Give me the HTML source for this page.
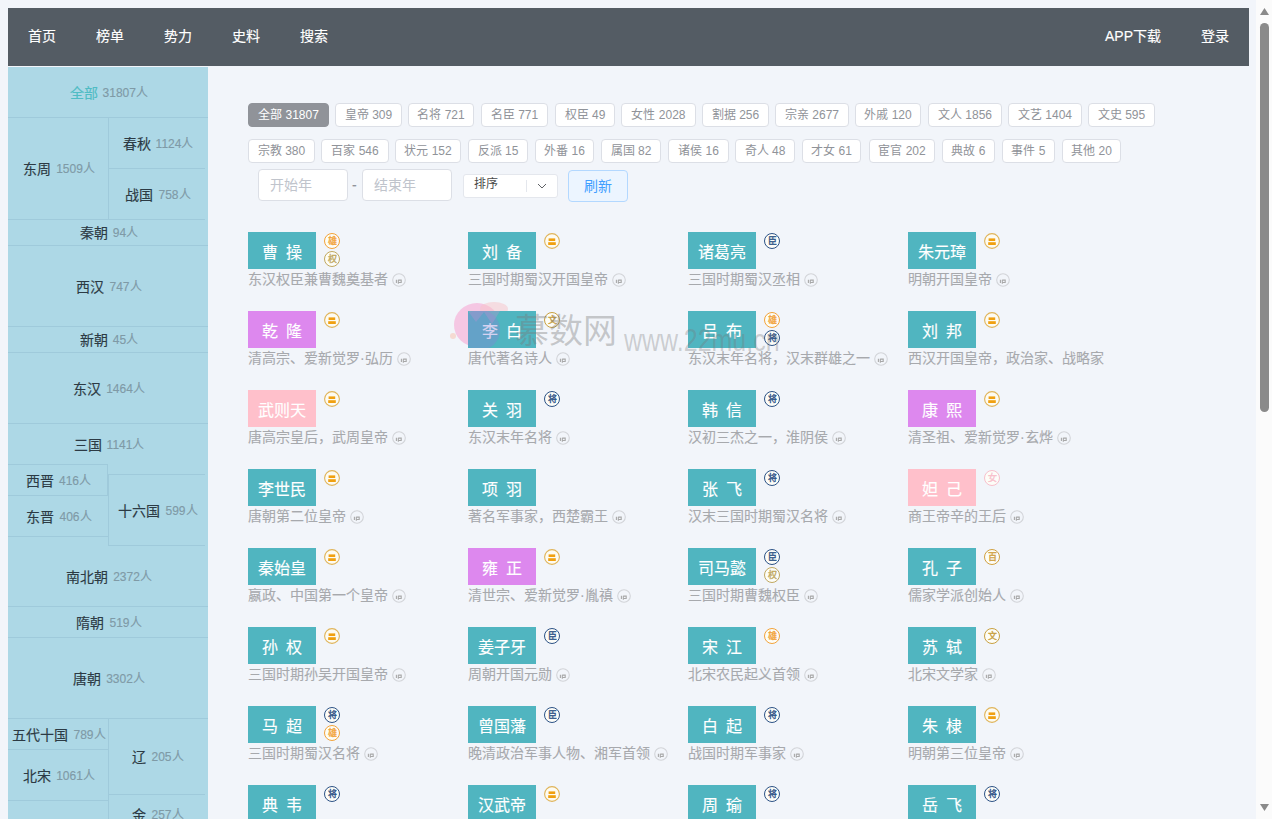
<!DOCTYPE html><html lang="zh-CN"><head><meta charset="utf-8"><style>
*{margin:0;padding:0;box-sizing:border-box}
html,body{width:1272px;height:819px;overflow:hidden;background:#f2f5fa;font-family:"Liberation Sans",sans-serif;-webkit-text-stroke-width:0.15px}
.a{position:absolute}
#hdr{left:8px;top:8px;width:1241px;height:58px;background:#545c64}
.nav{position:absolute;top:-1px;height:58px;line-height:58px;color:#fff;font-size:14px;white-space:nowrap}
#side{left:8px;top:67px;width:200px;height:752px;background:#add8e6;overflow:hidden}
.cell{position:absolute;display:flex;align-items:center;justify-content:center;white-space:nowrap;border-bottom:1px solid #9fcadb}
.cell .w{position:relative;top:1px;left:1px;line-height:16px}
.cell .n{font-size:14px;color:#2c3a44}
.cell .c{font-size:12px;color:#7f9aa6;margin-left:5px;position:relative;top:-1px}
.tag{-webkit-text-stroke-width:0;position:absolute;height:24px;line-height:22px;border:1px solid #dcdfe6;border-radius:4px;background:#fff;color:#909399;font-size:12px;text-align:center;white-space:nowrap}
.tag.on{background:#909399;border-color:#909399;color:#fff}
.inp{-webkit-text-stroke-width:0;position:absolute;height:32px;border:1px solid #dcdfe6;border-radius:4px;background:#fff;color:#c0c4cc;font-size:14px;line-height:30px;padding-left:11px}
.nm{position:absolute;width:68px;height:37px;line-height:41px;color:#fff;font-size:16px;text-align:center;white-space:nowrap}
.ds{-webkit-text-stroke-width:0.1px;position:absolute;font-size:14px;color:#a7a9ad;white-space:nowrap;line-height:14px}
.bd{position:absolute;width:16px;height:16px;border-radius:50%;border:1px solid;font-size:9px;line-height:14px;text-align:center;background:#fdfdf8;-webkit-text-stroke-width:0.35px}
.ip{display:inline-block;width:14px;height:14px;vertical-align:top;margin-left:4px;margin-top:1px}
</style></head><body><div id="hdr" class="a">
<div class="nav" style="left:20px">首页</div>
<div class="nav" style="left:88px">榜单</div>
<div class="nav" style="left:156px">势力</div>
<div class="nav" style="left:224px">史料</div>
<div class="nav" style="left:292px">搜索</div>
<div class="nav" style="left:1097px">APP下载</div>
<div class="nav" style="left:1193px">登录</div>
</div>
<div id="side" class="a">
<div class="cell" style="left:0px;top:0px;width:200px;height:51px;"><span class="w"><span class="n" style="color:#4fbcc4">全部</span><span class="c" style="margin-left:4.5px">31807人</span></span></div>
<div class="cell" style="left:0px;top:51px;width:100px;height:102px;"><span class="w"><span class="n" style="">东周</span><span class="c" style="">1509人</span></span></div>
<div class="cell" style="left:100px;top:51px;width:97px;height:51px;border-left:1px solid #9fcadb;"><span class="w"><span class="n" style="">春秋</span><span class="c" style="">1124人</span></span></div>
<div class="cell" style="left:100px;top:102px;width:97px;height:51px;border-left:1px solid #9fcadb;"><span class="w"><span class="n" style="">战国</span><span class="c" style="">758人</span></span></div>
<div class="cell" style="left:0px;top:153px;width:200px;height:26px;"><span class="w"><span class="n" style="">秦朝</span><span class="c" style="">94人</span></span></div>
<div class="cell" style="left:0px;top:179px;width:200px;height:81px;"><span class="w"><span class="n" style="">西汉</span><span class="c" style="">747人</span></span></div>
<div class="cell" style="left:0px;top:260px;width:200px;height:26px;"><span class="w"><span class="n" style="">新朝</span><span class="c" style="">45人</span></span></div>
<div class="cell" style="left:0px;top:286px;width:200px;height:71px;"><span class="w"><span class="n" style="">东汉</span><span class="c" style="">1464人</span></span></div>
<div class="cell" style="left:0px;top:357px;width:200px;height:41px;border-bottom:none;"><span class="w"><span class="n" style="">三国</span><span class="c" style="">1141人</span></span></div>
<div class="cell" style="left:0px;top:397px;width:100px;height:32px;border-top:1px solid #9fcadb;border-right:1px solid #9fcadb;"><span class="w"><span class="n" style="">西晋</span><span class="c" style="">416人</span></span></div>
<div class="cell" style="left:0px;top:429px;width:100px;height:41px;"><span class="w"><span class="n" style="">东晋</span><span class="c" style="">406人</span></span></div>
<div class="cell" style="left:100px;top:407px;width:97px;height:72px;border-left:1px solid #9fcadb;border-top:1px solid #9fcadb;"><span class="w"><span class="n" style="">十六国</span><span class="c" style="">599人</span></span></div>
<div class="cell" style="left:0px;top:479px;width:200px;height:61px;"><span class="w"><span class="n" style="">南北朝</span><span class="c" style="">2372人</span></span></div>
<div class="cell" style="left:0px;top:540px;width:200px;height:31px;"><span class="w"><span class="n" style="">隋朝</span><span class="c" style="">519人</span></span></div>
<div class="cell" style="left:0px;top:571px;width:200px;height:81px;"><span class="w"><span class="n" style="">唐朝</span><span class="c" style="">3302人</span></span></div>
<div class="cell" style="left:0px;top:652px;width:100px;height:31px;"><span class="w"><span class="n" style="">五代十国</span><span class="c" style="">789人</span></span></div>
<div class="cell" style="left:0px;top:683px;width:100px;height:51px;"><span class="w"><span class="n" style="">北宋</span><span class="c" style="">1061人</span></span></div>
<div class="cell" style="left:100px;top:652px;width:97px;height:76px;border-left:1px solid #9fcadb;"><span class="w"><span class="n" style="">辽</span><span class="c" style="">205人</span></span></div>
<div class="cell" style="left:100px;top:728px;width:97px;height:40px;border-left:1px solid #9fcadb;"><span class="w"><span class="n" style="">金</span><span class="c" style="">257人</span></span></div>
<div class="cell" style="left:0px;top:734px;width:100px;height:59px;"><span class="w"><span class="n" style="">南宋</span><span class="c" style="">1200人</span></span></div>
</div>
<div class="tag on" style="left:248px;top:103px;width:81px">全部 31807</div>
<div class="tag" style="left:335px;top:103px;width:67px">皇帝 309</div>
<div class="tag" style="left:408px;top:103px;width:66px">名将 721</div>
<div class="tag" style="left:481px;top:103px;width:67px">名臣 771</div>
<div class="tag" style="left:555px;top:103px;width:60px">权臣 49</div>
<div class="tag" style="left:621px;top:103px;width:75px">女性 2028</div>
<div class="tag" style="left:702px;top:103px;width:67px">割据 256</div>
<div class="tag" style="left:775px;top:103px;width:74px">宗亲 2677</div>
<div class="tag" style="left:855px;top:103px;width:66px">外戚 120</div>
<div class="tag" style="left:928px;top:103px;width:74px">文人 1856</div>
<div class="tag" style="left:1008px;top:103px;width:74px">文艺 1404</div>
<div class="tag" style="left:1088px;top:103px;width:67px">文史 595</div>
<div class="tag" style="left:248px;top:139px;width:67px">宗教 380</div>
<div class="tag" style="left:321px;top:139px;width:68px">百家 546</div>
<div class="tag" style="left:395px;top:139px;width:66px">状元 152</div>
<div class="tag" style="left:468px;top:139px;width:60px">反派 15</div>
<div class="tag" style="left:535px;top:139px;width:59px">外番 16</div>
<div class="tag" style="left:601px;top:139px;width:60px">属国 82</div>
<div class="tag" style="left:668px;top:139px;width:61px">诸侯 16</div>
<div class="tag" style="left:735px;top:139px;width:60px">奇人 48</div>
<div class="tag" style="left:802px;top:139px;width:59px">才女 61</div>
<div class="tag" style="left:869px;top:139px;width:66px">宦官 202</div>
<div class="tag" style="left:942px;top:139px;width:53px">典故 6</div>
<div class="tag" style="left:1002px;top:139px;width:53px">事件 5</div>
<div class="tag" style="left:1062px;top:139px;width:59px">其他 20</div>
<div class="inp" style="left:258px;top:169px;width:90px">开始年</div>
<div class="a" style="left:352px;top:177px;font-size:14px;color:#909399">-</div>
<div class="inp" style="left:362px;top:169px;width:90px">结束年</div>
<div class="a" style="left:463px;top:174px;width:95px;height:24px;background:#fff;border:1px solid #e4e7ed;border-radius:3px"><span class="a" style="left:10px;top:1px;font-size:12px;color:#4a4a4a;line-height:16px;-webkit-text-stroke-width:0">排序</span><span class="a" style="left:62px;top:5px;width:1px;height:12px;background:#e4e7ed"></span><svg class="a" style="left:73px;top:8px" width="10" height="6" viewBox="0 0 10 6"><path d="M1 1 L5 5 L9 1" fill="none" stroke="#606266" stroke-width="1"/></svg></div>
<div class="a" style="left:568px;top:170px;width:60px;height:32px;background:#ecf5ff;border:1px solid #b3d8ff;border-radius:4px;color:#409eff;font-size:14px;line-height:30px;text-align:center;-webkit-text-stroke-width:0">刷新</div>
<div class="nm" style="left:248px;top:232px;background:#50b5c0">曹<i style="display:inline-block;width:8px"></i>操</div>
<div class="bd" style="left:324px;top:233px;border-color:#f2a33a;color:#f2a33a">雄</div>
<div class="bd" style="left:324px;top:251px;border-color:#c0a860;color:#c0a860">权</div>
<div class="ds" style="left:248px;top:272px">东汉权臣兼曹魏奠基者<svg class="ip" width="14" height="14" viewBox="0 0 14 14"><circle cx="7" cy="7" r="6.3" fill="none" stroke="#d2d4d8" stroke-width="1.1"/><path d="M4.4 6.8v3.2M6.3 6.8v3.9M6.3 7.1h2.9v2.4h-2.9" fill="none" stroke="#a8a8a8" stroke-width="1.1"/></svg></div>
<div class="nm" style="left:468px;top:232px;background:#50b5c0">刘<i style="display:inline-block;width:8px"></i>备</div>
<svg class="a" style="left:544px;top:233px" width="16" height="16" viewBox="0 0 16 16"><circle cx="8" cy="8" r="7.4" fill="#fdfbf2" stroke="#dfb45a" stroke-width="1.1"/><rect x="4.6" y="5.4" width="6.6" height="2.6" fill="#f0a010"/><rect x="4.2" y="9.2" width="7.6" height="2.8" fill="#f0a010"/></svg>
<div class="ds" style="left:468px;top:272px">三国时期蜀汉开国皇帝<svg class="ip" width="14" height="14" viewBox="0 0 14 14"><circle cx="7" cy="7" r="6.3" fill="none" stroke="#d2d4d8" stroke-width="1.1"/><path d="M4.4 6.8v3.2M6.3 6.8v3.9M6.3 7.1h2.9v2.4h-2.9" fill="none" stroke="#a8a8a8" stroke-width="1.1"/></svg></div>
<div class="nm" style="left:688px;top:232px;background:#50b5c0">诸葛亮</div>
<div class="bd" style="left:764px;top:233px;border-color:#2c5286;color:#2c5286">臣</div>
<div class="ds" style="left:688px;top:272px">三国时期蜀汉丞相<svg class="ip" width="14" height="14" viewBox="0 0 14 14"><circle cx="7" cy="7" r="6.3" fill="none" stroke="#d2d4d8" stroke-width="1.1"/><path d="M4.4 6.8v3.2M6.3 6.8v3.9M6.3 7.1h2.9v2.4h-2.9" fill="none" stroke="#a8a8a8" stroke-width="1.1"/></svg></div>
<div class="nm" style="left:908px;top:232px;background:#50b5c0">朱元璋</div>
<svg class="a" style="left:984px;top:233px" width="16" height="16" viewBox="0 0 16 16"><circle cx="8" cy="8" r="7.4" fill="#fdfbf2" stroke="#dfb45a" stroke-width="1.1"/><rect x="4.6" y="5.4" width="6.6" height="2.6" fill="#f0a010"/><rect x="4.2" y="9.2" width="7.6" height="2.8" fill="#f0a010"/></svg>
<div class="ds" style="left:908px;top:272px">明朝开国皇帝<svg class="ip" width="14" height="14" viewBox="0 0 14 14"><circle cx="7" cy="7" r="6.3" fill="none" stroke="#d2d4d8" stroke-width="1.1"/><path d="M4.4 6.8v3.2M6.3 6.8v3.9M6.3 7.1h2.9v2.4h-2.9" fill="none" stroke="#a8a8a8" stroke-width="1.1"/></svg></div>
<div class="nm" style="left:248px;top:311px;background:#dd88ee">乾<i style="display:inline-block;width:8px"></i>隆</div>
<svg class="a" style="left:324px;top:312px" width="16" height="16" viewBox="0 0 16 16"><circle cx="8" cy="8" r="7.4" fill="#fdfbf2" stroke="#dfb45a" stroke-width="1.1"/><rect x="4.6" y="5.4" width="6.6" height="2.6" fill="#f0a010"/><rect x="4.2" y="9.2" width="7.6" height="2.8" fill="#f0a010"/></svg>
<div class="ds" style="left:248px;top:351px">清高宗、爱新觉罗·弘历<svg class="ip" width="14" height="14" viewBox="0 0 14 14"><circle cx="7" cy="7" r="6.3" fill="none" stroke="#d2d4d8" stroke-width="1.1"/><path d="M4.4 6.8v3.2M6.3 6.8v3.9M6.3 7.1h2.9v2.4h-2.9" fill="none" stroke="#a8a8a8" stroke-width="1.1"/></svg></div>
<div class="nm" style="left:468px;top:311px;background:#50b5c0">李<i style="display:inline-block;width:8px"></i>白</div>
<div class="bd" style="left:544px;top:312px;border-color:#c8a040;color:#c8a040">文</div>
<div class="ds" style="left:468px;top:351px">唐代著名诗人<svg class="ip" width="14" height="14" viewBox="0 0 14 14"><circle cx="7" cy="7" r="6.3" fill="none" stroke="#d2d4d8" stroke-width="1.1"/><path d="M4.4 6.8v3.2M6.3 6.8v3.9M6.3 7.1h2.9v2.4h-2.9" fill="none" stroke="#a8a8a8" stroke-width="1.1"/></svg></div>
<div class="nm" style="left:688px;top:311px;background:#50b5c0">吕<i style="display:inline-block;width:8px"></i>布</div>
<div class="bd" style="left:764px;top:312px;border-color:#f2a33a;color:#f2a33a">雄</div>
<div class="bd" style="left:764px;top:330px;border-color:#2c5286;color:#2c5286">将</div>
<div class="ds" style="left:688px;top:351px">东汉末年名将，汉末群雄之一<svg class="ip" width="14" height="14" viewBox="0 0 14 14"><circle cx="7" cy="7" r="6.3" fill="none" stroke="#d2d4d8" stroke-width="1.1"/><path d="M4.4 6.8v3.2M6.3 6.8v3.9M6.3 7.1h2.9v2.4h-2.9" fill="none" stroke="#a8a8a8" stroke-width="1.1"/></svg></div>
<div class="nm" style="left:908px;top:311px;background:#50b5c0">刘<i style="display:inline-block;width:8px"></i>邦</div>
<svg class="a" style="left:984px;top:312px" width="16" height="16" viewBox="0 0 16 16"><circle cx="8" cy="8" r="7.4" fill="#fdfbf2" stroke="#dfb45a" stroke-width="1.1"/><rect x="4.6" y="5.4" width="6.6" height="2.6" fill="#f0a010"/><rect x="4.2" y="9.2" width="7.6" height="2.8" fill="#f0a010"/></svg>
<div class="ds" style="left:908px;top:351px">西汉开国皇帝，政治家、战略家</div>
<div class="nm" style="left:248px;top:390px;background:#ffc0cb">武则天</div>
<svg class="a" style="left:324px;top:391px" width="16" height="16" viewBox="0 0 16 16"><circle cx="8" cy="8" r="7.4" fill="#fdfbf2" stroke="#dfb45a" stroke-width="1.1"/><rect x="4.6" y="5.4" width="6.6" height="2.6" fill="#f0a010"/><rect x="4.2" y="9.2" width="7.6" height="2.8" fill="#f0a010"/></svg>
<div class="ds" style="left:248px;top:430px">唐高宗皇后，武周皇帝<svg class="ip" width="14" height="14" viewBox="0 0 14 14"><circle cx="7" cy="7" r="6.3" fill="none" stroke="#d2d4d8" stroke-width="1.1"/><path d="M4.4 6.8v3.2M6.3 6.8v3.9M6.3 7.1h2.9v2.4h-2.9" fill="none" stroke="#a8a8a8" stroke-width="1.1"/></svg></div>
<div class="nm" style="left:468px;top:390px;background:#50b5c0">关<i style="display:inline-block;width:8px"></i>羽</div>
<div class="bd" style="left:544px;top:391px;border-color:#2c5286;color:#2c5286">将</div>
<div class="ds" style="left:468px;top:430px">东汉末年名将<svg class="ip" width="14" height="14" viewBox="0 0 14 14"><circle cx="7" cy="7" r="6.3" fill="none" stroke="#d2d4d8" stroke-width="1.1"/><path d="M4.4 6.8v3.2M6.3 6.8v3.9M6.3 7.1h2.9v2.4h-2.9" fill="none" stroke="#a8a8a8" stroke-width="1.1"/></svg></div>
<div class="nm" style="left:688px;top:390px;background:#50b5c0">韩<i style="display:inline-block;width:8px"></i>信</div>
<div class="bd" style="left:764px;top:391px;border-color:#2c5286;color:#2c5286">将</div>
<div class="ds" style="left:688px;top:430px">汉初三杰之一，淮阴侯<svg class="ip" width="14" height="14" viewBox="0 0 14 14"><circle cx="7" cy="7" r="6.3" fill="none" stroke="#d2d4d8" stroke-width="1.1"/><path d="M4.4 6.8v3.2M6.3 6.8v3.9M6.3 7.1h2.9v2.4h-2.9" fill="none" stroke="#a8a8a8" stroke-width="1.1"/></svg></div>
<div class="nm" style="left:908px;top:390px;background:#dd88ee">康<i style="display:inline-block;width:8px"></i>熙</div>
<svg class="a" style="left:984px;top:391px" width="16" height="16" viewBox="0 0 16 16"><circle cx="8" cy="8" r="7.4" fill="#fdfbf2" stroke="#dfb45a" stroke-width="1.1"/><rect x="4.6" y="5.4" width="6.6" height="2.6" fill="#f0a010"/><rect x="4.2" y="9.2" width="7.6" height="2.8" fill="#f0a010"/></svg>
<div class="ds" style="left:908px;top:430px">清圣祖、爱新觉罗·玄烨<svg class="ip" width="14" height="14" viewBox="0 0 14 14"><circle cx="7" cy="7" r="6.3" fill="none" stroke="#d2d4d8" stroke-width="1.1"/><path d="M4.4 6.8v3.2M6.3 6.8v3.9M6.3 7.1h2.9v2.4h-2.9" fill="none" stroke="#a8a8a8" stroke-width="1.1"/></svg></div>
<div class="nm" style="left:248px;top:469px;background:#50b5c0">李世民</div>
<svg class="a" style="left:324px;top:470px" width="16" height="16" viewBox="0 0 16 16"><circle cx="8" cy="8" r="7.4" fill="#fdfbf2" stroke="#dfb45a" stroke-width="1.1"/><rect x="4.6" y="5.4" width="6.6" height="2.6" fill="#f0a010"/><rect x="4.2" y="9.2" width="7.6" height="2.8" fill="#f0a010"/></svg>
<div class="ds" style="left:248px;top:509px">唐朝第二位皇帝<svg class="ip" width="14" height="14" viewBox="0 0 14 14"><circle cx="7" cy="7" r="6.3" fill="none" stroke="#d2d4d8" stroke-width="1.1"/><path d="M4.4 6.8v3.2M6.3 6.8v3.9M6.3 7.1h2.9v2.4h-2.9" fill="none" stroke="#a8a8a8" stroke-width="1.1"/></svg></div>
<div class="nm" style="left:468px;top:469px;background:#50b5c0">项<i style="display:inline-block;width:8px"></i>羽</div>
<div class="ds" style="left:468px;top:509px">著名军事家，西楚霸王<svg class="ip" width="14" height="14" viewBox="0 0 14 14"><circle cx="7" cy="7" r="6.3" fill="none" stroke="#d2d4d8" stroke-width="1.1"/><path d="M4.4 6.8v3.2M6.3 6.8v3.9M6.3 7.1h2.9v2.4h-2.9" fill="none" stroke="#a8a8a8" stroke-width="1.1"/></svg></div>
<div class="nm" style="left:688px;top:469px;background:#50b5c0">张<i style="display:inline-block;width:8px"></i>飞</div>
<div class="bd" style="left:764px;top:470px;border-color:#2c5286;color:#2c5286">将</div>
<div class="ds" style="left:688px;top:509px">汉末三国时期蜀汉名将<svg class="ip" width="14" height="14" viewBox="0 0 14 14"><circle cx="7" cy="7" r="6.3" fill="none" stroke="#d2d4d8" stroke-width="1.1"/><path d="M4.4 6.8v3.2M6.3 6.8v3.9M6.3 7.1h2.9v2.4h-2.9" fill="none" stroke="#a8a8a8" stroke-width="1.1"/></svg></div>
<div class="nm" style="left:908px;top:469px;background:#ffc0cb">妲<i style="display:inline-block;width:8px"></i>己</div>
<div class="bd" style="left:984px;top:470px;border-color:#f8c0cc;color:#f8c0cc">女</div>
<div class="ds" style="left:908px;top:509px">商王帝辛的王后<svg class="ip" width="14" height="14" viewBox="0 0 14 14"><circle cx="7" cy="7" r="6.3" fill="none" stroke="#d2d4d8" stroke-width="1.1"/><path d="M4.4 6.8v3.2M6.3 6.8v3.9M6.3 7.1h2.9v2.4h-2.9" fill="none" stroke="#a8a8a8" stroke-width="1.1"/></svg></div>
<div class="nm" style="left:248px;top:548px;background:#50b5c0">秦始皇</div>
<svg class="a" style="left:324px;top:549px" width="16" height="16" viewBox="0 0 16 16"><circle cx="8" cy="8" r="7.4" fill="#fdfbf2" stroke="#dfb45a" stroke-width="1.1"/><rect x="4.6" y="5.4" width="6.6" height="2.6" fill="#f0a010"/><rect x="4.2" y="9.2" width="7.6" height="2.8" fill="#f0a010"/></svg>
<div class="ds" style="left:248px;top:588px">嬴政、中国第一个皇帝<svg class="ip" width="14" height="14" viewBox="0 0 14 14"><circle cx="7" cy="7" r="6.3" fill="none" stroke="#d2d4d8" stroke-width="1.1"/><path d="M4.4 6.8v3.2M6.3 6.8v3.9M6.3 7.1h2.9v2.4h-2.9" fill="none" stroke="#a8a8a8" stroke-width="1.1"/></svg></div>
<div class="nm" style="left:468px;top:548px;background:#dd88ee">雍<i style="display:inline-block;width:8px"></i>正</div>
<svg class="a" style="left:544px;top:549px" width="16" height="16" viewBox="0 0 16 16"><circle cx="8" cy="8" r="7.4" fill="#fdfbf2" stroke="#dfb45a" stroke-width="1.1"/><rect x="4.6" y="5.4" width="6.6" height="2.6" fill="#f0a010"/><rect x="4.2" y="9.2" width="7.6" height="2.8" fill="#f0a010"/></svg>
<div class="ds" style="left:468px;top:588px">清世宗、爱新觉罗·胤禛<svg class="ip" width="14" height="14" viewBox="0 0 14 14"><circle cx="7" cy="7" r="6.3" fill="none" stroke="#d2d4d8" stroke-width="1.1"/><path d="M4.4 6.8v3.2M6.3 6.8v3.9M6.3 7.1h2.9v2.4h-2.9" fill="none" stroke="#a8a8a8" stroke-width="1.1"/></svg></div>
<div class="nm" style="left:688px;top:548px;background:#50b5c0">司马懿</div>
<div class="bd" style="left:764px;top:549px;border-color:#2c5286;color:#2c5286">臣</div>
<div class="bd" style="left:764px;top:567px;border-color:#c0a860;color:#c0a860">权</div>
<div class="ds" style="left:688px;top:588px">三国时期曹魏权臣<svg class="ip" width="14" height="14" viewBox="0 0 14 14"><circle cx="7" cy="7" r="6.3" fill="none" stroke="#d2d4d8" stroke-width="1.1"/><path d="M4.4 6.8v3.2M6.3 6.8v3.9M6.3 7.1h2.9v2.4h-2.9" fill="none" stroke="#a8a8a8" stroke-width="1.1"/></svg></div>
<div class="nm" style="left:908px;top:548px;background:#50b5c0">孔<i style="display:inline-block;width:8px"></i>子</div>
<div class="bd" style="left:984px;top:549px;border-color:#d0a040;color:#d0a040">百</div>
<div class="ds" style="left:908px;top:588px">儒家学派创始人<svg class="ip" width="14" height="14" viewBox="0 0 14 14"><circle cx="7" cy="7" r="6.3" fill="none" stroke="#d2d4d8" stroke-width="1.1"/><path d="M4.4 6.8v3.2M6.3 6.8v3.9M6.3 7.1h2.9v2.4h-2.9" fill="none" stroke="#a8a8a8" stroke-width="1.1"/></svg></div>
<div class="nm" style="left:248px;top:627px;background:#50b5c0">孙<i style="display:inline-block;width:8px"></i>权</div>
<svg class="a" style="left:324px;top:628px" width="16" height="16" viewBox="0 0 16 16"><circle cx="8" cy="8" r="7.4" fill="#fdfbf2" stroke="#dfb45a" stroke-width="1.1"/><rect x="4.6" y="5.4" width="6.6" height="2.6" fill="#f0a010"/><rect x="4.2" y="9.2" width="7.6" height="2.8" fill="#f0a010"/></svg>
<div class="ds" style="left:248px;top:667px">三国时期孙吴开国皇帝<svg class="ip" width="14" height="14" viewBox="0 0 14 14"><circle cx="7" cy="7" r="6.3" fill="none" stroke="#d2d4d8" stroke-width="1.1"/><path d="M4.4 6.8v3.2M6.3 6.8v3.9M6.3 7.1h2.9v2.4h-2.9" fill="none" stroke="#a8a8a8" stroke-width="1.1"/></svg></div>
<div class="nm" style="left:468px;top:627px;background:#50b5c0">姜子牙</div>
<div class="bd" style="left:544px;top:628px;border-color:#2c5286;color:#2c5286">臣</div>
<div class="ds" style="left:468px;top:667px">周朝开国元勋<svg class="ip" width="14" height="14" viewBox="0 0 14 14"><circle cx="7" cy="7" r="6.3" fill="none" stroke="#d2d4d8" stroke-width="1.1"/><path d="M4.4 6.8v3.2M6.3 6.8v3.9M6.3 7.1h2.9v2.4h-2.9" fill="none" stroke="#a8a8a8" stroke-width="1.1"/></svg></div>
<div class="nm" style="left:688px;top:627px;background:#50b5c0">宋<i style="display:inline-block;width:8px"></i>江</div>
<div class="bd" style="left:764px;top:628px;border-color:#f2a33a;color:#f2a33a">雄</div>
<div class="ds" style="left:688px;top:667px">北宋农民起义首领<svg class="ip" width="14" height="14" viewBox="0 0 14 14"><circle cx="7" cy="7" r="6.3" fill="none" stroke="#d2d4d8" stroke-width="1.1"/><path d="M4.4 6.8v3.2M6.3 6.8v3.9M6.3 7.1h2.9v2.4h-2.9" fill="none" stroke="#a8a8a8" stroke-width="1.1"/></svg></div>
<div class="nm" style="left:908px;top:627px;background:#50b5c0">苏<i style="display:inline-block;width:8px"></i>轼</div>
<div class="bd" style="left:984px;top:628px;border-color:#c8a040;color:#c8a040">文</div>
<div class="ds" style="left:908px;top:667px">北宋文学家<svg class="ip" width="14" height="14" viewBox="0 0 14 14"><circle cx="7" cy="7" r="6.3" fill="none" stroke="#d2d4d8" stroke-width="1.1"/><path d="M4.4 6.8v3.2M6.3 6.8v3.9M6.3 7.1h2.9v2.4h-2.9" fill="none" stroke="#a8a8a8" stroke-width="1.1"/></svg></div>
<div class="nm" style="left:248px;top:706px;background:#50b5c0">马<i style="display:inline-block;width:8px"></i>超</div>
<div class="bd" style="left:324px;top:707px;border-color:#2c5286;color:#2c5286">将</div>
<div class="bd" style="left:324px;top:725px;border-color:#f2a33a;color:#f2a33a">雄</div>
<div class="ds" style="left:248px;top:746px">三国时期蜀汉名将<svg class="ip" width="14" height="14" viewBox="0 0 14 14"><circle cx="7" cy="7" r="6.3" fill="none" stroke="#d2d4d8" stroke-width="1.1"/><path d="M4.4 6.8v3.2M6.3 6.8v3.9M6.3 7.1h2.9v2.4h-2.9" fill="none" stroke="#a8a8a8" stroke-width="1.1"/></svg></div>
<div class="nm" style="left:468px;top:706px;background:#50b5c0">曾国藩</div>
<div class="bd" style="left:544px;top:707px;border-color:#2c5286;color:#2c5286">臣</div>
<div class="ds" style="left:468px;top:746px">晚清政治军事人物、湘军首领<svg class="ip" width="14" height="14" viewBox="0 0 14 14"><circle cx="7" cy="7" r="6.3" fill="none" stroke="#d2d4d8" stroke-width="1.1"/><path d="M4.4 6.8v3.2M6.3 6.8v3.9M6.3 7.1h2.9v2.4h-2.9" fill="none" stroke="#a8a8a8" stroke-width="1.1"/></svg></div>
<div class="nm" style="left:688px;top:706px;background:#50b5c0">白<i style="display:inline-block;width:8px"></i>起</div>
<div class="bd" style="left:764px;top:707px;border-color:#2c5286;color:#2c5286">将</div>
<div class="ds" style="left:688px;top:746px">战国时期军事家<svg class="ip" width="14" height="14" viewBox="0 0 14 14"><circle cx="7" cy="7" r="6.3" fill="none" stroke="#d2d4d8" stroke-width="1.1"/><path d="M4.4 6.8v3.2M6.3 6.8v3.9M6.3 7.1h2.9v2.4h-2.9" fill="none" stroke="#a8a8a8" stroke-width="1.1"/></svg></div>
<div class="nm" style="left:908px;top:706px;background:#50b5c0">朱<i style="display:inline-block;width:8px"></i>棣</div>
<svg class="a" style="left:984px;top:707px" width="16" height="16" viewBox="0 0 16 16"><circle cx="8" cy="8" r="7.4" fill="#fdfbf2" stroke="#dfb45a" stroke-width="1.1"/><rect x="4.6" y="5.4" width="6.6" height="2.6" fill="#f0a010"/><rect x="4.2" y="9.2" width="7.6" height="2.8" fill="#f0a010"/></svg>
<div class="ds" style="left:908px;top:746px">明朝第三位皇帝<svg class="ip" width="14" height="14" viewBox="0 0 14 14"><circle cx="7" cy="7" r="6.3" fill="none" stroke="#d2d4d8" stroke-width="1.1"/><path d="M4.4 6.8v3.2M6.3 6.8v3.9M6.3 7.1h2.9v2.4h-2.9" fill="none" stroke="#a8a8a8" stroke-width="1.1"/></svg></div>
<div class="nm" style="left:248px;top:785px;background:#50b5c0">典<i style="display:inline-block;width:8px"></i>韦</div>
<div class="bd" style="left:324px;top:786px;border-color:#2c5286;color:#2c5286">将</div>
<div class="nm" style="left:468px;top:785px;background:#50b5c0">汉武帝</div>
<svg class="a" style="left:544px;top:786px" width="16" height="16" viewBox="0 0 16 16"><circle cx="8" cy="8" r="7.4" fill="#fdfbf2" stroke="#dfb45a" stroke-width="1.1"/><rect x="4.6" y="5.4" width="6.6" height="2.6" fill="#f0a010"/><rect x="4.2" y="9.2" width="7.6" height="2.8" fill="#f0a010"/></svg>
<div class="nm" style="left:688px;top:785px;background:#50b5c0">周<i style="display:inline-block;width:8px"></i>瑜</div>
<div class="bd" style="left:764px;top:786px;border-color:#2c5286;color:#2c5286">将</div>
<div class="nm" style="left:908px;top:785px;background:#50b5c0">岳<i style="display:inline-block;width:8px"></i>飞</div>
<div class="bd" style="left:984px;top:786px;border-color:#2c5286;color:#2c5286">将</div>
<svg class="a" style="left:444px;top:298px" width="70" height="56" viewBox="0 0 70 56"><defs><clipPath id="co"><path d="M0 0H70V13H24V50H70V56H0Z"/></clipPath><clipPath id="ci"><rect x="24" y="13" width="46" height="37"/></clipPath></defs><g clip-path="url(#co)"><ellipse cx="33" cy="27" rx="23" ry="22" fill="#f6a8d4" opacity="0.6"/><ellipse cx="50" cy="11" rx="14" ry="7" fill="#f8c4c8" opacity="0.5"/><circle cx="9" cy="38" r="3" fill="#f6c8b8" opacity="0.6"/></g><g clip-path="url(#ci)"><ellipse cx="36" cy="32" rx="20" ry="20" fill="#8a7fd8" opacity="0.35"/><path d="M24 13 L32 24 L40 14 L48 26 L56 13Z" fill="#c090d0" opacity="0.35"/></g></svg>
<div class="a" style="left:515px;top:309px;font-size:34px;line-height:44px;color:rgba(120,120,120,0.38);white-space:nowrap;-webkit-text-stroke-width:0">慕数网</div>
<div class="a" style="left:624px;top:329px;font-size:25px;line-height:28px;color:rgba(120,120,120,0.32);white-space:nowrap;-webkit-text-stroke-width:0;transform:scaleY(1.25);transform-origin:0 100%">www.22mu.cn</div>
<div class="a" style="left:1256px;top:0;width:16px;height:819px;background:#fbfbfb"></div>
<svg class="a" style="left:1260px;top:8px" width="9" height="7"><path d="M0 7 L4.5 0 L9 7Z" fill="#8a8a8a"/></svg>
<div class="a" style="left:1260px;top:23px;width:9px;height:389px;border-radius:4.5px;background:#8a8a8a"></div>
<svg class="a" style="left:1260px;top:804px" width="9" height="7"><path d="M0 0 L4.5 7 L9 0Z" fill="#8a8a8a"/></svg></body></html>
